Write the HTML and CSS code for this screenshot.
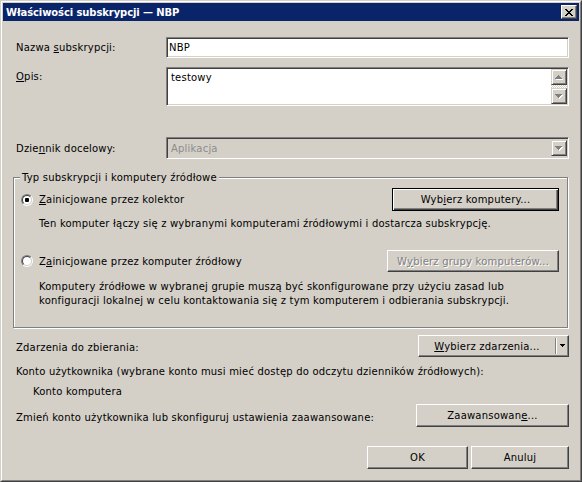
FILE: index.html
```html
<!DOCTYPE html>
<html lang="pl">
<head>
<meta charset="utf-8">
<title>Właściwości subskrypcji — NBP</title>
<link rel="stylesheet" href="styles.css">
</head>
<body>
<div class="window">
  <div class="frame">
    <div class="titlebar">
      <span class="title">Właściwości subskrypcji — NBP</span>
      <span class="close" aria-label="Zamknij">
        <svg width="8" height="7" viewBox="0 0 8 7" shape-rendering="crispEdges">
          <rect x="0" y="0" width="2" height="1"/><rect x="6" y="0" width="2" height="1"/>
          <rect x="1" y="1" width="2" height="1"/><rect x="5" y="1" width="2" height="1"/>
          <rect x="2" y="2" width="4" height="1"/>
          <rect x="3" y="3" width="2" height="1"/>
          <rect x="2" y="4" width="4" height="1"/>
          <rect x="1" y="5" width="2" height="1"/><rect x="5" y="5" width="2" height="1"/>
          <rect x="0" y="6" width="2" height="1"/><rect x="6" y="6" width="2" height="1"/>
        </svg>
      </span>
    </div>

    <div class="content">
      <div class="field-row row-name">
        <span class="label">Nazwa <u>s</u>ubskrypcji:</span>
        <div class="sunken edit">NBP</div>
      </div>

      <div class="field-row row-desc">
        <span class="label label-top"><u>O</u>pis:</span>
        <div class="sunken memo">
          <span class="memo-text">testowy</span>
          <div class="vscroll">
            <span class="sbtn">
              <svg width="8" height="5" viewBox="0 0 8 5" shape-rendering="crispEdges">
                <g fill="#fff"><rect x="4" y="1" width="1" height="1"/><rect x="3" y="2" width="3" height="1"/><rect x="2" y="3" width="5" height="1"/><rect x="1" y="4" width="7" height="1"/></g>
                <g fill="#808080"><rect x="3" y="0" width="1" height="1"/><rect x="2" y="1" width="3" height="1"/><rect x="1" y="2" width="5" height="1"/><rect x="0" y="3" width="7" height="1"/></g>
              </svg>
            </span>
            <span class="track"></span>
            <span class="sbtn">
              <svg width="8" height="5" viewBox="0 0 8 5" shape-rendering="crispEdges">
                <g fill="#fff"><rect x="1" y="1" width="7" height="1"/><rect x="2" y="2" width="5" height="1"/><rect x="3" y="3" width="3" height="1"/><rect x="4" y="4" width="1" height="1"/></g>
                <g fill="#808080"><rect x="0" y="0" width="7" height="1"/><rect x="1" y="1" width="5" height="1"/><rect x="2" y="2" width="3" height="1"/><rect x="3" y="3" width="1" height="1"/></g>
              </svg>
            </span>
          </div>
        </div>
      </div>

      <div class="field-row row-log">
        <span class="label">Dzie<u>n</u>nik docelowy:</span>
        <div class="sunken combo">
          <span class="combo-text">Aplikacja</span>
          <span class="sbtn">
            <svg width="8" height="5" viewBox="0 0 8 5" shape-rendering="crispEdges">
              <g fill="#fff"><rect x="1" y="1" width="7" height="1"/><rect x="2" y="2" width="5" height="1"/><rect x="3" y="3" width="3" height="1"/><rect x="4" y="4" width="1" height="1"/></g>
              <g fill="#808080"><rect x="0" y="0" width="7" height="1"/><rect x="1" y="1" width="5" height="1"/><rect x="2" y="2" width="3" height="1"/><rect x="3" y="3" width="1" height="1"/></g>
            </svg>
          </span>
        </div>
      </div>

      <div class="group">
        <span class="legend">Typ subskrypcji i komputery źródłowe</span>
        <div class="opt-row opt-first">
          <span class="radio checked"><span class="radio-in"></span></span>
          <span class="opt-label"><u>Z</u>ainicjowane przez kolektor</span>
          <span class="btn default btn-computers">Wyb<u>i</u>erz komputery...</span>
        </div>
        <p class="opt-desc desc-first">Ten komputer łączy się z wybranymi komputerami źródłowymi i dostarcza subskrypcję.</p>
        <div class="opt-row opt-second">
          <span class="radio"><span class="radio-in"></span></span>
          <span class="opt-label">Z<u>a</u>inicjowane przez komputer źródłowy</span>
          <span class="btn disabled btn-groups">W<u>y</u>bierz grupy komputerów...</span>
        </div>
        <p class="opt-desc desc-second">Komputery źródłowe w wybranej grupie muszą być skonfigurowane przy użyciu zasad lub<br>konfiguracji lokalnej w celu kontaktowania się z tym komputerem i odbierania subskrypcji.</p>
      </div>

      <div class="line-row row-events">
        <span class="text">Zdarzenia do zbierania:</span>
        <span class="btn split">
          <span class="split-main"><u>W</u>ybierz zdarzenia...</span>
          <span class="split-sep"></span>
          <span class="split-arrow">
            <svg width="5" height="3" viewBox="0 0 5 3" shape-rendering="crispEdges"><rect x="0" y="0" width="5" height="1"/><rect x="1" y="1" width="3" height="1"/><rect x="2" y="2" width="1" height="1"/></svg>
          </span>
        </span>
      </div>

      <p class="text account-label">Konto użytkownika (wybrane konto musi mieć dostęp do odczytu dzienników źródłowych):</p>
      <p class="text account-value">Konto komputera</p>

      <div class="line-row row-advanced">
        <span class="text">Zmień konto użytkownika lub skonfiguruj ustawienia zaawansowane:</span>
        <span class="btn btn-advanced">Zaawansowan<u>e</u>...</span>
      </div>

      <div class="actions">
        <span class="btn btn-ok">OK</span>
        <span class="btn btn-cancel">Anuluj</span>
      </div>
    </div>
  </div>
</div>
</body>
</html>
```

FILE: styles.css
```css
* { box-sizing: border-box; }
html, body { margin: 0; padding: 0; }
body {
  width: 582px;
  height: 482px;
  overflow: hidden;
  background: #d4d0c8;
  font-family: "DejaVu Sans", "Noto Sans", sans-serif;
  font-size: 10px;
  line-height: 13px;
  letter-spacing: 0.2px;
  color: #000;
}
u { text-decoration: underline; text-underline-offset: 1px; text-decoration-thickness: 1px; }
p { margin: 0; }

.window {
  width: 582px;
  height: 482px;
  border: 1px solid;
  border-color: #d4d0c8 #404040 #404040 #d4d0c8;
}
.frame {
  height: 100%;
  border: 1px solid;
  border-color: #fff #808080 #808080 #fff;
  padding: 1px;
  display: flex;
  flex-direction: column;
}

.titlebar {
  height: 18px;
  flex: none;
  background: #0a246a;
  display: flex;
  align-items: center;
  justify-content: space-between;
  padding: 0 2px 0 3px;
}
.title { color: #fff; font-weight: bold; font-size: 10px; letter-spacing: -0.1px; white-space: nowrap; }
.close {
  width: 16px;
  height: 14px;
  display: flex;
  align-items: center;
  justify-content: center;
  background: #d4d0c8;
  border: 1px solid;
  border-color: #fff #404040 #404040 #fff;
  box-shadow: inset -1px -1px #808080;
  padding-right: 1px;
}

.content { padding: 16px 10px 0 10px; flex: 1; }

.field-row { display: flex; }
.label { width: 153px; padding-left: 3px; white-space: nowrap; flex: none; }

.sunken {
  border: 1px solid;
  border-color: #808080 #fff #fff #808080;
  box-shadow: inset 1px 1px #404040, inset -1px -1px #d4d0c8;
  background: #fff;
}

.row-name { align-items: center; }
.edit { flex: 1; height: 21px; padding: 0 2px; display: flex; align-items: center; }

.row-desc { margin-top: 9px; align-items: flex-start; }
.label-top { padding-top: 3px; }
.memo { flex: 1; height: 39px; padding: 1px; display: flex; }
.memo-text { flex: 1; padding: 2px 3px; }
.vscroll { width: 16px; display: flex; flex-direction: column; }
.track {
  flex: 1;
  background-image: repeating-conic-gradient(#fff 0 25%, #d4d0c8 0 50%);
  background-size: 2px 2px;
}
.sbtn {
  width: 16px;
  height: 16px;
  flex: none;
  display: flex;
  align-items: center;
  justify-content: center;
  background: #d4d0c8;
  border: 1px solid;
  border-color: #d4d0c8 #404040 #404040 #d4d0c8;
  box-shadow: inset 1px 1px #fff, inset -1px -1px #808080;
}

.row-log { margin-top: 31px; align-items: center; }
.combo {
  flex: 1;
  height: 22px;
  padding: 1px;
  display: flex;
  align-items: center;
  background: #d4d0c8;
}
.combo-text { flex: 1; padding-left: 3px; color: #8c8c8c; }

.group {
  position: relative;
  margin: 18px 1px 0 0;
  border: 1px solid #808080;
  box-shadow: inset 1px 1px #fff, 1px 1px #fff;
  padding: 10px 8px 19px 7px;
}
.legend {
  position: absolute;
  top: -7px;
  left: 6px;
  padding: 0 2px;
  background: #d4d0c8;
  white-space: nowrap;
}
.opt-row { display: flex; align-items: center; }
.radio {
  width: 12px;
  height: 12px;
  flex: none;
  border-radius: 50%;
  border: 1px solid;
  border-color: #808080 #fff #fff #808080;
  margin-right: 6px;
}
.radio-in {
  display: flex;
  align-items: center;
  justify-content: center;
  width: 10px;
  height: 10px;
  border-radius: 50%;
  border: 1px solid;
  border-color: #404040 #d4d0c8 #d4d0c8 #404040;
  background: #fff;
}
.radio.checked .radio-in::after {
  content: "";
  width: 4px;
  height: 4px;
  border-radius: 1px;
  background: #000;
}
.opt-label { flex: 1; white-space: nowrap; }
.opt-desc { padding-left: 18px; white-space: nowrap; }
.desc-first { margin-top: 6px; }
.opt-second { margin-top: 20px; }
.desc-second { margin-top: 8px; line-height: 14px; }

.btn {
  display: flex;
  align-items: center;
  justify-content: center;
  height: 23px;
  flex: none;
  background: #d4d0c8;
  border: 1px solid;
  border-color: #fff #404040 #404040 #fff;
  box-shadow: inset -1px -1px #808080;
  white-space: nowrap;
}
.btn.default {
  border-color: #000;
  box-shadow: inset 1px 1px #fff, inset -1px -1px #404040, inset -2px -2px #808080;
}
.btn.disabled { color: #808080; text-shadow: 1px 1px #fff; height: 22px; }
.btn-computers { width: 167px; }
.btn-groups { width: 172px; }

.line-row { display: flex; align-items: center; justify-content: space-between; }
.text { padding-left: 3px; white-space: nowrap; }
.row-events { margin-top: 7px; }
.row-events .text { padding-top: 2px; }
.split { width: 151px; height: 22px; justify-content: flex-start; }
.split-main { width: 136px; text-align: center; }
.split-sep { width: 2px; height: 16px; border-left: 1px solid #808080; border-right: 1px solid #fff; }
.split-arrow { flex: 1; display: flex; justify-content: center; padding-bottom: 1px; }

.account-label { margin-top: 8px; }
.account-value { margin-top: 7px; padding-left: 20px; }

.row-advanced { margin-top: 6px; }
.row-advanced .text { padding-top: 3px; }
.btn-advanced { width: 153px; }

.actions { display: flex; justify-content: flex-end; gap: 3px; margin-top: 19px; }
.btn-ok { width: 101px; }
.btn-cancel { width: 98px; }
```
